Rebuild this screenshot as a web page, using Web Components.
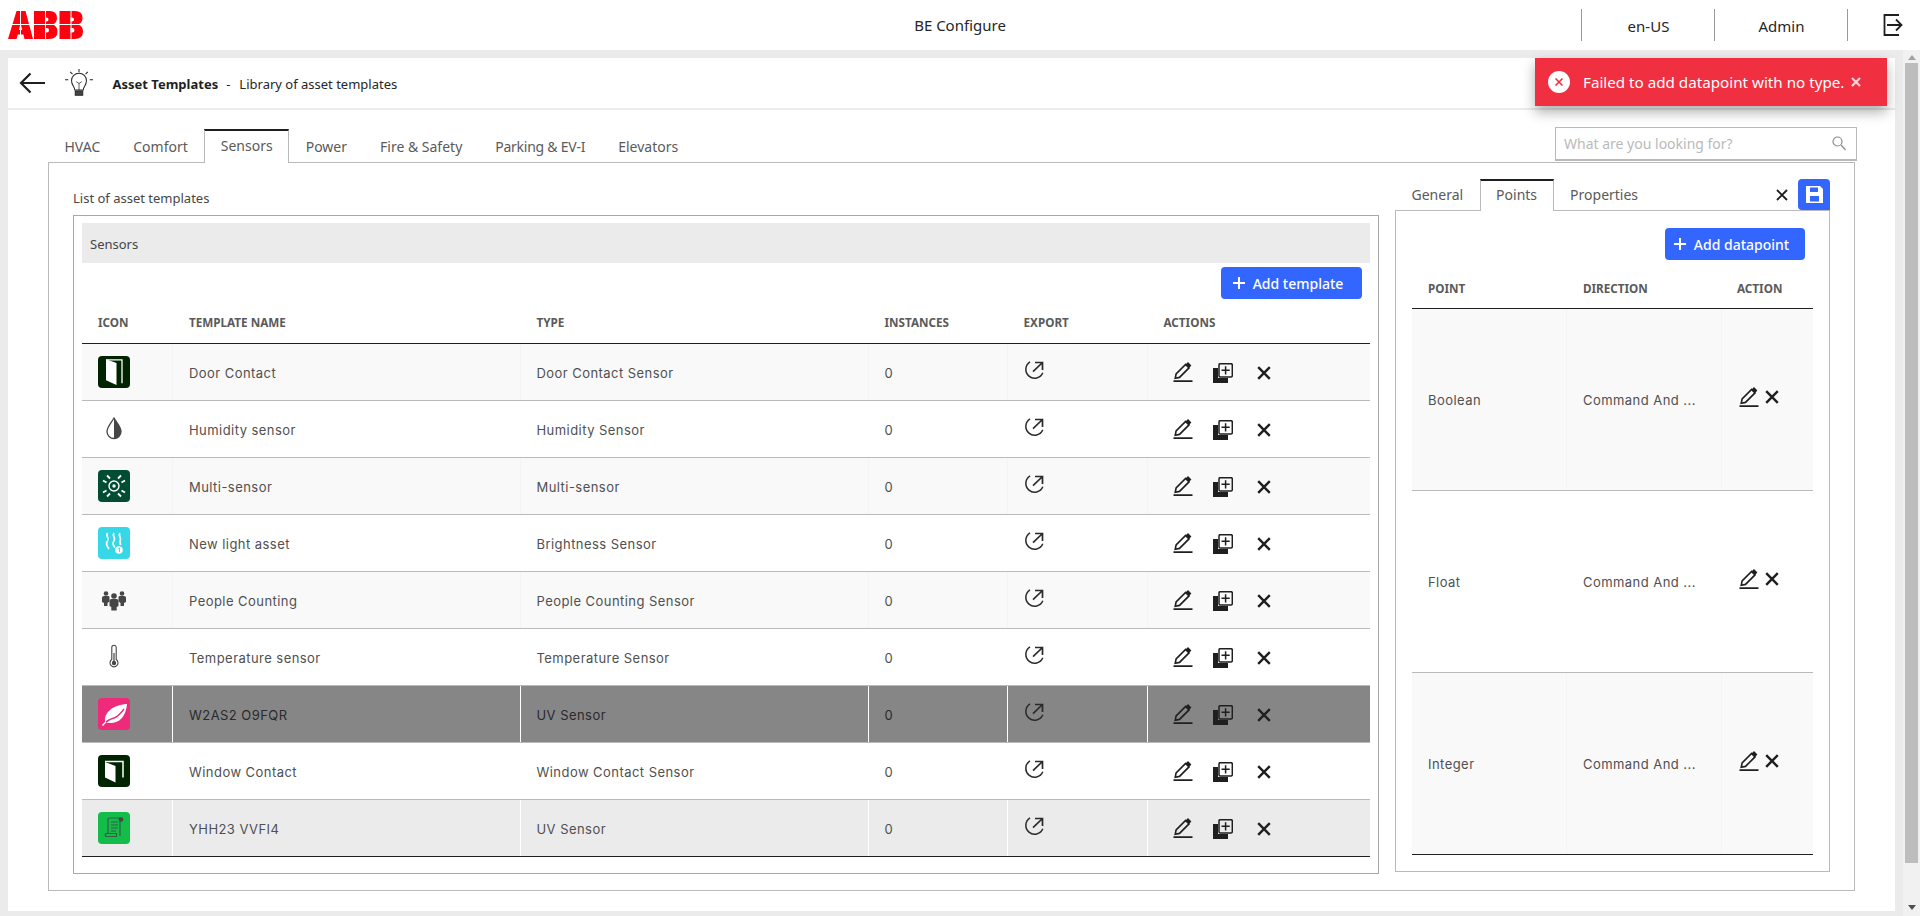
<!DOCTYPE html>
<html lang="en"><head><meta charset="utf-8"><title>BE Configure</title>
<style>
html,body{margin:0;height:916px;overflow:hidden}
body{background:#ebebeb;font-family:"Noto Sans","Liberation Sans",sans-serif;display:flex;flex-direction:column;color:#464646}
</style></head><body>
<app-header></app-header>
<app-main>
  <page-card>
    <toast-message slot="toast">Failed to add datapoint with no type.</toast-message>
    <page-title heading="Asset Templates" sub="Library of asset templates"></page-title>
    <tab-row>
      <tab-item>HVAC</tab-item><tab-item>Comfort</tab-item><tab-item active>Sensors</tab-item><tab-item>Power</tab-item><tab-item>Fire &amp; Safety</tab-item><tab-item style="letter-spacing:-.25px">Parking &amp; EV-I</tab-item><tab-item>Elevators</tab-item>
      <search-box slot="end"></search-box>
    </tab-row>
    <split-panel>
      <asset-list slot="left">
        <asset-row name="Door Contact" type="Door Contact Sensor" icon="door" tone="alt"></asset-row>
        <asset-row name="Humidity sensor" type="Humidity Sensor" icon="drop"></asset-row>
        <asset-row name="Multi-sensor" type="Multi-sensor" icon="multi" tone="alt"></asset-row>
        <asset-row name="New light asset" type="Brightness Sensor" icon="heat"></asset-row>
        <asset-row name="People Counting" type="People Counting Sensor" icon="people" tone="alt"></asset-row>
        <asset-row name="Temperature sensor" type="Temperature Sensor" icon="thermo"></asset-row>
        <asset-row name="W2AS2 O9FQR" type="UV Sensor" icon="leaf" tone="sel"></asset-row>
        <asset-row name="Window Contact" type="Window Contact Sensor" icon="window"></asset-row>
        <asset-row name="YHH23 VVFI4" type="UV Sensor" icon="scroll" tone="hover" last></asset-row>
      </asset-list>
      <points-panel slot="right">
        <point-row name="Boolean" tone="alt"></point-row>
        <point-row name="Float"></point-row>
        <point-row name="Integer" tone="alt" last></point-row>
      </points-panel>
    </split-panel>
  </page-card>
</app-main>
<script>
const PENCIL=`<svg class="pen" width="20" height="20" viewBox="0 0 20 20"><path d="M0.500 19.200h19" stroke="#1f1f1f" stroke-width="1.900" fill="none"/><path d="M2.200 16.300l.9-4.300L12.600 2.500l3.400 3.400-9.500 9.500z" fill="none" stroke="#1f1f1f" stroke-width="1.600"/><path d="M12.600 2.500L15 .1l3.400 3.400L16 5.900z" fill="#1f1f1f"/></svg>`;
const COPY=`<svg class="cop" width="20" height="20" viewBox="0 0 20 20"><path d="M0 5h5v10h10v5H0z" fill="#1f1f1f"/><path d="M3 5v12h12" fill="none" stroke="#1f1f1f" stroke-width="3"/><rect x="6" y=".7" width="13.300" height="13.300" rx="1.200" fill="none" stroke="#1f1f1f" stroke-width="1.500"/><path d="M12.600 3.200v8.200M8.500 7.300h8.200" stroke="#1f1f1f" stroke-width="1.500"/></svg>`;
const CROSS=`<svg class="crs" width="14" height="14" viewBox="0 0 14 14"><path d="M1.200 1.200l11.600 11.600M12.800 1.200L1.200 12.800" stroke="#1f1f1f" stroke-width="2.400" fill="none"/></svg>`;
const EXPORT=`<svg width="20" height="20" viewBox="0 0 20 20" fill="none" stroke="#2a2a2a" stroke-width="1.500"><path d="M6 .9A8.800 8.800 0 1 0 18.800 11.700"/><path d="M9 10.600L18 2M11 1.500h7.500v7.500" stroke-width="1.700"/></svg>`;
const tile=(c,b)=>`<svg width="32" height="32" viewBox="0 0 32 32"><rect width="32" height="32" rx="4" fill="${c}"/>${b}</svg>`;
const ICONS={
door:tile('#002300',`<path d="M8 3.200l10.500 3.800v22l-10.500-4.800z" fill="#fff"/><path d="M8 3.800h16v23.500" fill="none" stroke="#fff" stroke-width="1.300"/>`),
window:tile('#002300',`<path d="M7 7l10.500 4v16.500l-10.500-5z" fill="#fff"/><path d="M7 6.500h18v16" fill="none" stroke="#fff" stroke-width="1.500"/>`),
multi:tile('#004d33',`<g fill="none" stroke="#fff"><circle cx="16" cy="16" r="5" stroke-width="1.400"/><circle cx="16" cy="16" r="1.700" fill="#fff" stroke="none"/><path stroke-width="1.800" d="M9 5.500l3 3M23 5.500l-3 3M5 10.500l3.500 2M27 10.500l-3.500 2M9 26.500l3-3M23 26.500l-3-3M5 22.500l3.500-2M27 22.500l-3.500-2"/></g>`),
heat:tile('#36d7e6',`<g fill="none" stroke="#fff" stroke-width="1.700"><path d="M9.500 6c-2.500 3 2.500 5 0 8s0 6 1.500 8"/><path d="M16 6c-2.500 3 2.500 5 0 8s0 5 .8 6.500"/><path d="M22 6c-2.500 3 2.500 5 0 8l.5 4"/></g><circle cx="21" cy="23" r="3.800" fill="#fff"/><path d="M20.300 21.500l1.100-.5v4" stroke="#36d7e6" fill="none" stroke-width="1"/>`),
leaf:tile('#ee2a7b',`<path d="M29 6C28 18 22 25 12 25C10 25 8 24.500 7 23.500C6 15 14 7 29 6z" fill="#fff"/><path d="M4.500 27.500C9 22 12 21 16 20S23 15 26 11" stroke="#ee2a7b" stroke-width="1.300" fill="none"/><path d="M4.500 27.500L8 23.800" stroke="#fff" stroke-width="1.300" fill="none"/>`),
scroll:tile('#12bd4a',`<g fill="none" stroke="#3c5a48" stroke-width="1.200"><path d="M10 22V8q0-2 2-2h10v18"/><path d="M8 24.500h10.500v-3H8q-1.500 1.500 0 3z"/><path d="M13 10h7M13 13h7M13 16h7M13 19h5"/></g><circle cx="23" cy="7.500" r="2.300" fill="#464646"/>`),
drop:`<svg width="32" height="32" viewBox="0 0 32 32"><path d="M16 5c-3 5-7 9-7 13.500a7 7 0 0 0 14 0C23 14 19 10 16 5z" fill="#fff" stroke="#464646" stroke-width="1.300"/><path d="M16 5c3 5 7 9 7 13.500a7 7 0 0 1-7 7z" fill="#464646"/></svg>`,
people:`<svg width="32" height="32" viewBox="0 0 32 32" fill="#464646"><circle cx="8" cy="9.500" r="2.300"/><circle cx="24" cy="9.500" r="2.300"/><circle cx="16" cy="12" r="2.800"/><path d="M4 13.500q0-1.500 2-1.500h4q1.500 0 1.500 1v4.500L9.500 19v3H6v-3l-2-1z"/><path d="M28 13.500q0-1.500-2-1.500h-4q-1.500 0-1.500 1v4.500l2 1.500v3H26v-3l2-1z"/><path d="M11.500 17q0-2 2-2h5q2 0 2 2v5l-1.800 1v3.500h-5.400V23l-1.800-1z"/></svg>`,
thermo:`<svg width="32" height="32" viewBox="0 0 32 32"><path d="M13.800 6.500a2.200 2.200 0 0 1 4.400 0v12a4 4 0 1 1-4.400 0z" fill="#fff" stroke="#464646" stroke-width="1.100"/><circle cx="16" cy="22" r="2.200" fill="#464646"/><path d="M16 12v9" stroke="#464646" stroke-width="1.200"/></svg>`
};
function def(name,css,html){
  customElements.define(name,class extends HTMLElement{
    connectedCallback(){
      if(this.shadowRoot)return;
      const r=this.attachShadow({mode:'open'});
      const a=n=>this.getAttribute(n)||'';
      r.innerHTML=`<style>${css}</style>`+(typeof html==='function'?html(a,this):html);
    }
  });
}
def('app-header',`:host{display:grid;grid-template-columns:1fr auto 1fr;align-items:center;height:50px;background:#fff;flex:none;font-size:15px;color:#262626}
.r{display:flex;justify-content:flex-end;align-items:center}
.i{width:133px;height:32px;border-left:1px solid #9a9a9a;display:flex;align-items:center;justify-content:center;padding:1px 0 0 1px;box-sizing:border-box;font-size:15px}
.o{width:73px;height:32px;border-left:1px solid #9a9a9a;display:flex;align-items:center;justify-content:flex-start;padding-left:35px;box-sizing:border-box}
.l{padding-left:8px;display:flex}`,
`<div class="l"><svg width="76" height="28" viewBox="0 0 76 28" role="img" aria-label="ABB logo"><path fill="#ff000f" fill-rule="evenodd" d="M0 28L8.500 0H17.500L25 28H16.500L15.400 23.500H9.800L8.500 28ZM11 19H14.200L12.500 12Z"/><path fill="#ff000f" fill-rule="evenodd" d="M26 0H41.500Q49 0 49 7Q49 11.500 45 13.500Q49.500 15.500 49.500 20.500Q49.500 28 41 28H26ZM37 6.500V10.500H38.500Q40.500 10.500 40.500 8.500T38.500 6.500ZM37 17V21.500H38.700Q41 21.500 41 19.200T38.700 17Z"/><path fill="#ff000f" fill-rule="evenodd" d="M51.500 0H67Q74.500 0 74.500 7Q74.500 11.500 70.500 13.500Q75 15.500 75 20.500Q75 28 66.500 28H51.500ZM62.500 6.500V10.500H64Q66 10.500 66 8.500T64 6.500ZM62.500 17V21.500H64.200Q66.500 21.500 66.500 19.200T64.200 17Z"/><path stroke="#fff" stroke-width="1" d="M0 13.500H76M12.500 0V28M37.500 0V28M63 0V28"/></svg></div>
<div>BE Configure</div>
<div class="r"><div class="i">en-US</div><div class="i">Admin</div><div class="o"><svg width="20" height="22" viewBox="0 0 20 22" fill="none" stroke="#1f1f1f" stroke-width="1.800"><path d="M16 1H1.500v20H16"/><path d="M4 11h14.500M13 5.500l5.500 5.500-5.500 5.500"/></svg></div></div>`);
def('app-main',`:host{display:flex;flex:1;min-height:0}
.c{flex:1;padding:8px 8px 5px 8px;display:flex;min-width:0}
.s{width:17px;background:#f1f1f1;display:flex;flex-direction:column;align-items:center}
.u{width:0;height:0;border:4px solid transparent;border-bottom:5px solid #a3a3a3;border-top:0;margin-top:5px}
.t{width:13px;background:#bdbdbd;margin:3px 0 0 2px;align-self:flex-start;height:800px}
.d{width:0;height:0;border:4px solid transparent;border-top:5px solid #505050;border-bottom:0;margin-top:auto;margin-bottom:6px}`,
`<div class="c"><slot></slot></div><div class="s"><div class="u"></div><div class="t"></div><div class="d"></div></div>`);
def('page-card',`:host{display:block;flex:1;background:#fff;position:relative;min-width:0}`,
`<slot name="toast"></slot><slot></slot>`);
def('toast-message',`:host{position:absolute;left:1527px;top:0;width:352px;height:48px;background:#f03040;color:#fff;box-sizing:border-box;display:flex;align-items:center;padding-left:13px;font-size:15.2px;box-shadow:0 6px 12px rgba(0,0,0,.32);z-index:5;white-space:nowrap}
svg{flex:none}
.t{margin-left:13px}
.x{margin-left:7px;font-size:0;display:flex;margin-top:-1px}`,
`<svg width="22" height="22" viewBox="0 0 22 22"><circle cx="11" cy="11" r="11" fill="#fff"/><path d="M7.500 7.500l7 7M14.500 7.500l-7 7" stroke="#f03040" stroke-width="1.600"/></svg><span class="t"><slot></slot></span><span class="x"><svg width="10" height="10" viewBox="0 0 10 10"><path d="M1 1l8 8M9 1L1 9" stroke="#fbd5d8" stroke-width="2.200"/></svg></span>`);
def('page-title',`:host{display:flex;align-items:center;height:50px;border-bottom:2px solid #ebebeb;font-size:13px;color:#262626;white-space:nowrap}
.a{margin-left:11px;display:flex}.b{margin-left:20px;display:flex}
strong{margin-left:19.5px;font-weight:700;color:#1f1f1f;padding-top:2px}.m{margin:0 9px 0 8px;padding-top:2px}.s{padding-top:2px}`,
(a)=>`<span class="a"><svg width="26" height="22" viewBox="0 0 26 22" fill="none" stroke="#1f1f1f" stroke-width="2.200"><path d="M26 11H2M11.500 1.500L2 11l9.500 9.500"/></svg></span>
<span class="b"><svg width="28" height="31" viewBox="0 0 30 32" fill="none" stroke="#262626" stroke-width="1.100"><path d="M10.500 23c0-3.500-3.500-5-3.500-10a8 8 0 0 1 16 0c0 5-3.500 6.500-3.500 10z"/><path d="M12 14l3 2 3-2M15 16v7" stroke-width=".8"/><path d="M11 24h8v4.500h-8z" fill="#464646"/><path d="M15 .5v3.500M5.500 3.500l2.500 2.500M24.500 3.500L22 6M0 12h3.500M26.500 12H30"/></svg></span>
<strong>${a('heading')}</strong><span class="m">-</span><span class="s">${a('sub')}</span>`);
def('tab-row',`:host{display:flex;justify-content:space-between;align-items:flex-end;height:33px;margin:19px 40px 0;position:relative}
.t{display:flex;height:33px}
::slotted(search-box){margin:-2px -2px 1px 0}`,
`<div class="t"><slot></slot></div><slot name="end"></slot>`);
def('tab-item',`:host{display:block;height:33px;box-sizing:border-box;padding:0 15.5px;line-height:33px;font-size:14px;color:#5a5a5a;white-space:nowrap;border:1px solid transparent;border-width:2px 1px 0}
:host([active]){border-color:#1f1f1f #bababa transparent;background:#fff;position:relative;height:34px;margin-bottom:-1px;z-index:1;line-height:31px}
.x{display:block;margin-top:-1px}`,
`<span class="x"><slot></slot></span>`);
def('search-box',`:host{display:flex;width:302px;height:34px;box-sizing:border-box;border:1px solid #bababa;border-bottom-width:2px;background:#fff;align-items:center;padding:0 10px 0 8px;font-size:14px;color:#bababa;justify-content:space-between}`,
`<span>What are you looking for?</span><svg width="14" height="15" viewBox="0 0 14 15" fill="none" stroke="#8c8c8c" stroke-width="1.200"><circle cx="5.500" cy="5.500" r="4.500"/><path d="M9 9l4.500 5"/></svg>`);
def('split-panel',`:host{display:grid;grid-template-columns:1306px 435px;column-gap:16px;margin:0 40px;height:729px;box-sizing:border-box;border:1px solid #bababa;padding:16px 0 0 24px;background:#fff}`,
`<slot name="left"></slot><slot name="right"></slot>`);
const HEAD=`color:#5a5a5a;font-size:11.7px;font-weight:700;`;
def('asset-list',`:host{display:block}
.l{height:36px;display:flex;align-items:center;font-size:13px;padding-top:1px;box-sizing:border-box;color:#464646}
.b{height:659px;box-sizing:border-box;border:1px solid #a8a8a8;padding:7px 8px}
.band{height:40px;background:#ebebeb;display:flex;align-items:center;padding:1px 0 0 8px;box-sizing:border-box;font-size:13px}
.act{display:flex;justify-content:flex-end;padding:4px 8px 0 0}
.h{display:grid;grid-template-columns:91px 348px 348px 139px 140px 1fr;height:45px;border-bottom:1px solid #1f1f1f;box-sizing:border-box;align-items:center;padding-top:2px;${HEAD}}
.h span{padding-left:16px}.h span:nth-child(n+3){padding-left:15.5px}`,
`<div class="l">List of asset templates</div><div class="b"><div class="band">Sensors</div><div class="act"><add-button w="141">Add template</add-button></div>
<div class="h"><span>ICON</span><span>TEMPLATE NAME</span><span>TYPE</span><span>INSTANCES</span><span>EXPORT</span><span>ACTIONS</span></div><slot></slot></div>`);
def('add-button',`:host{display:flex;height:32px;background:#3366ff;color:#fff;border-radius:4px;align-items:center;justify-content:center;gap:8px;font-size:14px;font-weight:500;white-space:nowrap;box-sizing:border-box;padding-right:7px}`,
(a,e)=>{e.style.width=a('w')+'px';return `<svg width="12" height="12" viewBox="0 0 12 12"><path d="M6 0v12M0 6h12" stroke="#fff" stroke-width="2"/></svg><span><slot></slot></span>`});
const CELLS=`font-family:Inter,"Noto Sans",sans-serif;font-size:13px;letter-spacing:.45px;color:#505050;`;
def('asset-row',`:host{display:grid;grid-template-columns:91px 348px 348px 139px 140px 1fr;height:57px;box-sizing:border-box;border-bottom:1px solid #bababa;background:#fff;${CELLS}}
:host([tone=alt]){background:#f9f9f9}:host([tone=sel]){background:#868686;color:#2a2a2a}:host([tone=hover]){background:#ebebeb}
:host([last]){border-bottom-color:#1f1f1f}
div{display:flex;align-items:center;padding-left:16px;border-right:1px solid #fff;box-sizing:border-box;min-width:0}
div:nth-child(n+4){padding-left:15.5px}
:host([tone=alt]) div{border-right-color:#f4f4f4}
span{padding-top:1px}
div:last-child{border-right:0;padding-left:25px}
div.ex{padding-left:16px}.ex svg{margin-top:-2px}
.cop{margin-left:20px;margin-top:1px}.crs{margin-left:24px;margin-top:2px}.pen{margin-top:-1px}`,
(a)=>`<div>${ICONS[a('icon')]}</div><div><span>${a('name')}</span></div><div><span>${a('type')}</span></div><div><span>0</span></div><div class="ex">${EXPORT}</div><div class="ac">${PENCIL}${COPY}${CROSS}</div>`);
def('points-panel',`:host{display:block}
.t{display:flex;height:31px;align-items:stretch;position:relative}
.sp{flex:1}
.x{display:flex;align-items:center;margin-right:10px}
.s{width:32px;background:#3366ff;border-radius:4px 4px 0 4px;display:flex;align-items:center;justify-content:center}
.b{height:662px;box-sizing:border-box;border:1px solid #bababa;padding:17px 16px 16px;background:#fff}
.act{display:flex;justify-content:flex-end;padding-right:8px}
.h{display:grid;grid-template-columns:155px 154px 1fr;height:49px;border-bottom:1px solid #1f1f1f;box-sizing:border-box;align-items:center;padding-top:7px;${HEAD}}
.h span{padding-left:16px}`,
`<div class="t"><tab-item style="height:31px;line-height:30px">General</tab-item><tab-item active style="height:32px;line-height:30px">Points</tab-item><tab-item style="height:31px;line-height:30px">Properties</tab-item><span class="sp"></span><span class="x"><svg width="12" height="12" viewBox="0 0 12 12"><path d="M1 1l10 10M11 1L1 11" stroke="#1f1f1f" stroke-width="1.900"/></svg></span><span class="s"><svg width="17" height="17" viewBox="0 0 17 17"><path fill="#fff" fill-rule="evenodd" d="M0 0h14l3 3v14H0zM4 1.500v4.500h8V1.500zM4 10v5.500h9V10z"/></svg></span></div>
<div class="b"><div class="act"><add-button w="140">Add datapoint</add-button></div><div class="h"><span>POINT</span><span>DIRECTION</span><span>ACTION</span></div><slot></slot></div>`);
def('point-row',`:host{display:grid;grid-template-columns:155px 155px 1fr;height:182px;box-sizing:border-box;border-bottom:1px solid #bababa;background:#fff;${CELLS}}
:host([tone=alt]){background:#f9f9f9}:host([last]){border-bottom-color:#1f1f1f}
div{display:flex;align-items:center;padding-left:16px;border-right:1px solid #fff;box-sizing:border-box}
:host([tone=alt]) div{border-right-color:#f4f4f4}
div:last-child{border-right:0;padding-left:17px;gap:6px}
div:last-child svg{margin-top:-6px}`,
(a)=>`<div>${a('name')}</div><div>Command And ...</div><div>${PENCIL}${CROSS}</div>`);
</script>
</body></html>
